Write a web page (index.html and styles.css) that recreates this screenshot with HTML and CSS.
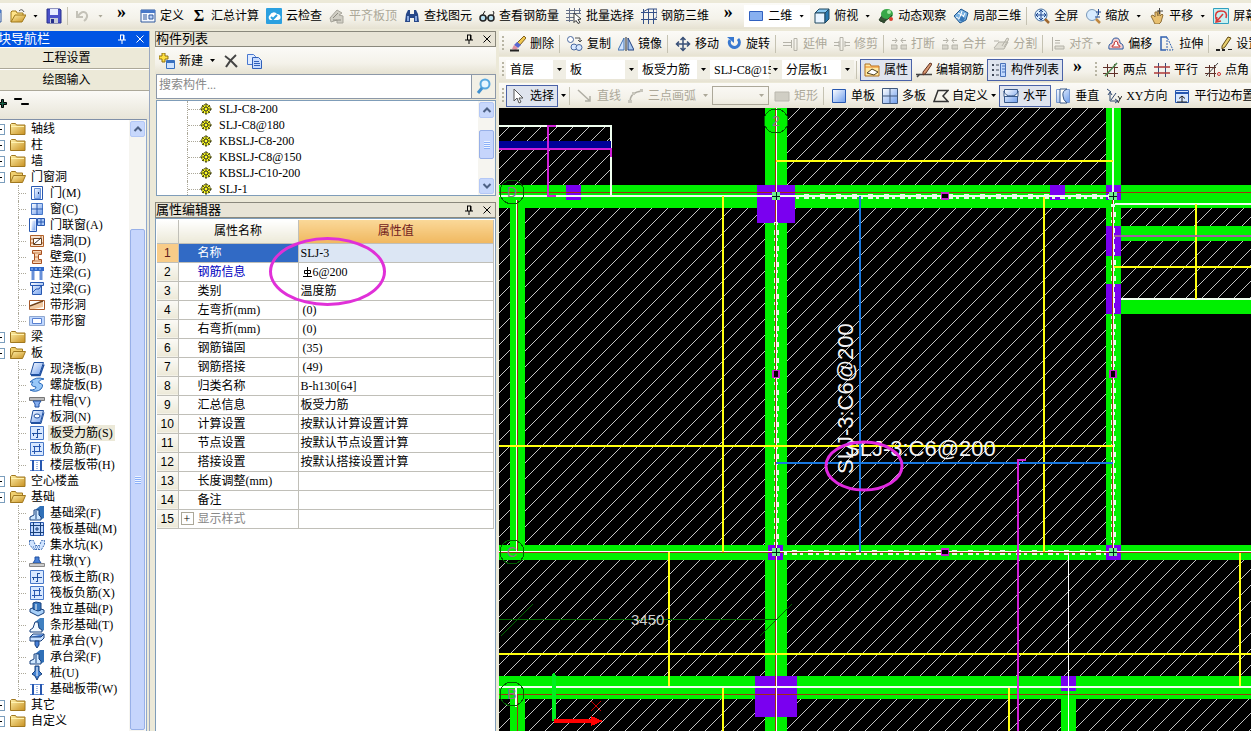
FILE: index.html
```html
<!DOCTYPE html>
<html lang="zh-CN">
<head>
    <meta charset="UTF-8">
    <meta name="viewport" content="width=device-width, initial-scale=1.0">
    <title>钢筋算量</title>
    <link rel="stylesheet" href="styles.css">
</head>
<body>
    <!-- icon sprite -->
    <svg class="sprite" aria-hidden="true">
        <defs>
            <linearGradient id="blueFill" x1="0" y1="0" x2="1" y2="1"><stop offset="0" stop-color="#fff"/><stop offset="1" stop-color="#6c9cec"/></linearGradient>
            <linearGradient id="goldFill" x1="0" y1="0" x2="1" y2="1"><stop offset="0" stop-color="#fff0a8"/><stop offset="1" stop-color="#c89020"/></linearGradient>
        </defs>
        <symbol id="open" viewBox="0 0 16 16"><path d="M1 14V4l1-1h4l1 2h6v2" fill="#ffe48a" stroke="#a07818"/><path d="M1 14L5 7h11l-4 7z" fill="url(#goldFill)" stroke="#a07818"/><path d="M9 3q3-3 5 1" fill="none" stroke="#555"/></symbol>
        <symbol id="save" viewBox="0 0 16 16"><path d="M1 1h13l1 1v13H1z" fill="#4a50c8" stroke="#26308c"/><path d="M4 1h8v6H4z" fill="#e8ecff"/><path d="M4 10h8v5H4z" fill="#c8ccd8"/><path d="M5 11h3v4H5z" fill="#26308c"/></symbol>
        <symbol id="undo" viewBox="0 0 16 16"><path d="M2 3v6h6M3 8q4-6 8-3 3 4-2 8" fill="none" stroke="#c4c2b8" stroke-width="2"/></symbol>
        <symbol id="define" viewBox="0 0 16 16"><path d="M1 2h14v12H1z" fill="#f4f8ff" stroke="#31589c"/><path d="M1 2h14v3H1z" fill="#4878c8"/><path d="M3 7h4M3 9h4M3 11h4" stroke="#31589c"/><path d="M9 7h4v4H9z" fill="#b8d0f8" stroke="#31589c"/></symbol>
        <symbol id="cloud" viewBox="0 0 16 16"><rect width="16" height="16" rx="1" fill="#2ba0e0"/><path d="M4 12a3 3 0 0 1 0-5 4 4 0 0 1 7-1 3 3 0 0 1 1 6z" fill="#fff"/><path d="M5 9l2 2 4-4" fill="none" stroke="#2ba0e0" stroke-width="2"/></symbol>
        <symbol id="flat" viewBox="0 0 16 16"><path d="M1 10L8 2l5 3-3 2 4 1v7H8v-3l-6 2z" fill="#d0cec4" stroke="#a8a69c"/><path d="M4 10l5-5M4 12h8" stroke="#8c8a80"/></symbol>
        <symbol id="find" viewBox="0 0 16 16"><path d="M2 6l2-4h2v4h4V2h2l2 4 1 8h-5v-4H6v4H1z" fill="#284888"/><path d="M3 8h2v5H3zM11 8h2v5h-2z" fill="#88a8e0"/></symbol>
        <symbol id="glasses" viewBox="0 0 16 16"><path d="M6 3L3 8M14 3l1 2-2 4" fill="none" stroke="#222"/><circle cx="4" cy="10" r="3" fill="#b8e0f0" stroke="#222" stroke-width="1.5"/><circle cx="12" cy="10" r="3" fill="#b8e0f0" stroke="#222" stroke-width="1.5"/><path d="M7 10h2" stroke="#222"/></symbol>
        <symbol id="batch" viewBox="0 0 16 16"><path d="M0 2.5h15M0 5.5h15M0 9.5h8M3.5 0v14M8.5 0v9M13.5 0v6M0 12.500h7" stroke="#667088"/><path d="M8 5l7 6-3 .5 2 3-2 1-2-3-2 2z" fill="#fff" stroke="#333"/></symbol>
        <symbol id="grid3" viewBox="0 0 16 16"><path d="M0 4.500h16M0 11.500h16M2.500 1v15M7.500 1v15M12.500 1v15M2 4l5-3h9v8l-4 3" fill="none" stroke="#345088"/></symbol>
        <symbol id="rect" viewBox="0 0 16 16"><path d="M1.500 3.500h13v9h-13z" fill="#88b0f0" stroke="#3060c0"/></symbol>
        <symbol id="cube" viewBox="0 0 16 16"><path d="M1 5l4-4h10l-4 4z" fill="#88c8f0" stroke="#204860"/><path d="M1 5h10v10H1z" fill="#e8f4ff" stroke="#204860"/><path d="M11 5l4-4v10l-4 4z" fill="#2878b0" stroke="#204860"/></symbol>
        <symbol id="orbit" viewBox="0 0 16 16"><path d="M1 12l4-6 5 3-4 6z" fill="#385838" stroke="#284028"/><ellipse cx="9" cy="6" rx="6" ry="5" fill="#38a848"/><circle cx="11" cy="4" r="2" fill="#a0e8a0"/><path d="M2 13Q9 14 14 7" fill="none" stroke="#284028"/><circle cx="13" cy="11" r="2" fill="#d84030"/></symbol>
        <symbol id="local3" viewBox="0 0 16 16"><path d="M1 8l7-7 7 4-2 7-6 3z" fill="#78b0e0" stroke="#205890"/><path d="M3 9l6 3 3-7M5 5l6 3M9 3l-3 9" fill="none" stroke="#fff"/><path d="M8 8l4 2-2 4-4-2z" fill="#3878b8"/></symbol>
        <symbol id="full" viewBox="0 0 16 16"><circle cx="7" cy="7" r="6" fill="#d8ecff" stroke="#4870a0"/><path d="M7 2v10M2 7h10M5 4l2-2 2 2M5 10l2 2 2-2M4 5L2 7l2 2M10 5l2 2-2 2" fill="none" stroke="#204890"/><path d="M11 11l4 4" stroke="#a06830" stroke-width="2.500"/></symbol>
        <symbol id="zoom" viewBox="0 0 16 16"><circle cx="7" cy="7" r="5.500" fill="#d8ecff" stroke="#7898b8"/><path d="M11 11l4 4" stroke="#c08840" stroke-width="2.500"/><path d="M13.500 1v6M11 4h5M10 9h5" stroke="#204890"/></symbol>
        <symbol id="pan" viewBox="0 0 16 16"><path d="M2 8l2-1 2 2V4h2l1 4V3h2v5l2-2 1 1-2 7-2 2H6z" fill="#e8c070" stroke="#907038"/><path d="M10.500 0v6M8 3h6" stroke="#444"/></symbol>
        <symbol id="screen" viewBox="0 0 16 16"><path d="M.5.500h15v15H.5z" fill="#c8f0f0" stroke="#30a0c0"/><path d="M3 11q-2-8 5-8t5 7M10 6l-6 7M4 9l-1 5 5-1" fill="none" stroke="#d83838" stroke-width="1.500"/></symbol>
        <symbol id="erase" viewBox="0 0 16 16"><path d="M14 0l2 2-6 7-3-2z" fill="#f0c850" stroke="#806020"/><path d="M7 6l4 3-3 3-4-3z" fill="#5868d0"/><path d="M4 9l4 3-2 2-4-1z" fill="#e090a0"/><path d="M0 14.500h9" stroke="#222" stroke-width="2"/></symbol>
        <symbol id="copy" viewBox="0 0 16 16"><circle cx="3.500" cy="3.500" r="3" fill="#fff" stroke="#4868a0"/><path d="M8 2h5v4M11 4l2 2 2-2" fill="none" stroke="#555"/><circle cx="7" cy="11" r="3" fill="#d8e8ff" stroke="#4868a0"/><circle cx="12" cy="11.500" r="3" fill="#d8e8ff" stroke="#4868a0"/></symbol>
        <symbol id="mirror" viewBox="0 0 16 16"><path d="M6 2v12H0z" fill="#d0e4ff" stroke="#4070b0"/><path d="M8 1v14" stroke="#222"/><path d="M10 2v12h6z" fill="#a8c8f0" stroke="#204080"/></symbol>
        <symbol id="move" viewBox="0 0 16 16"><path d="M8 1v14M1 8h14M5.500 4L8 1.500 10.500 4M5.500 12L8 14.500 10.500 12M4 5.500L1.500 8 4 10.500M12 5.500L14.500 8 12 10.500" fill="none" stroke="#385078" stroke-width="1.500"/></symbol>
        <symbol id="rotate" viewBox="0 0 16 16"><path d="M4 4a5 5 0 1 0 8-1" fill="none" stroke="#3878d0" stroke-width="3"/><path d="M1 1h7v6z" fill="#3878d0"/></symbol>
        <symbol id="extend" viewBox="0 0 16 16"><path d="M0 6.500h8M0 9.500h8M8.500 4v8M11 2.500h3v12h-3z" fill="none" stroke="#b4b2a8"/></symbol>
        <symbol id="trim" viewBox="0 0 16 16"><path d="M0 6.500h5M0 9.500h5M11 6.500h5M11 9.500h5M6 1.500h3v13H6zM5 5v6M11 5v6" fill="none" stroke="#b4b2a8"/></symbol>
        <symbol id="break" viewBox="0 0 16 16"><path d="M0 9h6v4H0zM10 9h6v4h-6z" fill="#d8d6cc" stroke="#b4b2a8"/><path d="M1 4.500h5M4 2l2 2.500L4 7M10 4.500h5M12 2l-2 2.500L12 7" fill="none" stroke="#b4b2a8"/></symbol>
        <symbol id="split" viewBox="0 0 16 16"><path d="M1 12l5-6h9l-4 7H1M9 10l5-8 2 1-5 8M1 5h5" fill="#e0ded4" stroke="#b4b2a8"/></symbol>
        <symbol id="align" viewBox="0 0 16 16"><path d="M2.500 1v14M5 4.500h5M5 7h5M5 10h9v3H5z" fill="#e0ded4" stroke="#b4b2a8"/></symbol>
        <symbol id="offset" viewBox="0 0 16 16"><path d="M1 13Q0 8 4 7 4 2 8 2t4 5q4 1 3 6z" fill="#f4d0d0" stroke="#2858a0"/><path d="M4 11q0-2 2-2 0-4 2-4t2 4q2 0 2 2z" fill="#fff" stroke="#c03030"/></symbol>
        <symbol id="stretch" viewBox="0 0 16 16"><path d="M8 1H2v13h5" fill="none" stroke="#3060b0" stroke-width="1.500"/><path d="M8 1v13h6z" fill="none" stroke="#3060b0" stroke-dasharray="2 1"/></symbol>
        <symbol id="setpt" viewBox="0 0 16 16"><path d="M6 10l6-9 3 1-6 9-3 2z" fill="#e8d070" stroke="#604810"/><path d="M0 13h4v2H0zM6 13h3v2H6zM12 13h4v1h-4z" fill="#222"/></symbol>
        <symbol id="prop" viewBox="0 0 16 16"><path d="M1 2h5l1 2h8v10H1z" fill="#ffe8a0" stroke="#b07020"/><path d="M1 5h14" stroke="#e88020"/><path d="M3 11l5-4 6 3-4 3z" fill="#fff" stroke="#504020"/></symbol>
        <symbol id="editbar" viewBox="0 0 16 16"><path d="M0 12.500h16M4 12l-3 3" stroke="#444" stroke-width="1.500"/><path d="M7 10l7-9 2 1-6 9-3 2z" fill="#d89870" stroke="#603020"/></symbol>
        <symbol id="list" viewBox="0 0 16 16"><path d="M1 2h2v2H1zM1 7h2v2H1zM1 12h2v2H1z" fill="#404858"/><path d="M5 3h3M5 8h3M5 13h3" stroke="#404858"/><path d="M9.500 1.500h5v13h-5z" fill="#c0d8ff" stroke="#4870b8"/><path d="M11 4h3M11 7h3M11 10h3" stroke="#4870b8"/></symbol>
        <symbol id="twopt" viewBox="0 0 16 16"><path d="M4.500 2v13M11.500 2v13M0 5.500h15M0 11.500h15" stroke="#603028"/><path d="M2 14L14 1" stroke="#508850" stroke-width="1.500"/></symbol>
        <symbol id="parallel" viewBox="0 0 16 16"><path d="M4.500 1v14M11.500 1v14" stroke="#384878"/><path d="M0 5h16M0 11h16" stroke="#b03838" stroke-width="1.500"/></symbol>
        <symbol id="ptangle" viewBox="0 0 16 16"><path d="M4.500 3v12M9.500 3v12M0 5.500h11M0 11.500h11" stroke="#603028"/><path d="M1 14L13 1" stroke="#444"/><circle cx="14" cy="12" r="1.500" fill="none" stroke="#d03030"/></symbol>
        <symbol id="cursor" viewBox="0 0 16 16"><path d="M4 1v12l3-3 2 5 2-1-2-4h4z" fill="#fff" stroke="#555"/></symbol>
        <symbol id="line" viewBox="0 0 16 16"><path d="M1 2l12 11M13 8v5H8" fill="none" stroke="#b0aea4" stroke-width="1.500"/></symbol>
        <symbol id="arc" viewBox="0 0 16 16"><path d="M2 14Q2 4 14 3" fill="none" stroke="#b0aea4" stroke-width="1.500"/><path d="M0 12h4v3H0zM4 4h3v3H4zM12 1h3v3h-3z" fill="#c8c6bc"/></symbol>
        <symbol id="rectg" viewBox="0 0 16 16"><path d="M1 4h14v9H1z" fill="#d0cec4" stroke="#bab8ae"/></symbol>
        <symbol id="single" viewBox="0 0 16 16"><path d="M1.500 1.500h13v13h-13z" fill="url(#blueFill)" stroke="#2858b0"/></symbol>
        <symbol id="multi" viewBox="0 0 16 16"><path d="M.5.500h15v15H.5z" fill="url(#blueFill)" stroke="#40587c"/><path d="M8 0v16M0 8h16" stroke="#40587c"/></symbol>
        <symbol id="poly" viewBox="0 0 16 16"><path d="M5 2.500h10L10 8l5 5.500H1z" fill="none" stroke="#333" stroke-width="1.500"/></symbol>
        <symbol id="horiz" viewBox="0 0 16 16"><path d="M1.500 1.500h13v13h-13z" fill="url(#blueFill)" stroke="#385888"/><path d="M1 3q1 5 7 5t7-5v5.500H1z" fill="#fff" stroke="#385888"/></symbol>
        <symbol id="vert" viewBox="0 0 16 16"><path d="M1.500 1.500h13v13h-13z" fill="url(#blueFill)" stroke="#7898d0"/><path d="M12 1q-5 2-4 7 0 4 4 7H5V1z" fill="#fff" stroke="#385888"/></symbol>
        <symbol id="xy" viewBox="0 0 16 16"><path d="M4 5v8h8M2 7l2-3 2 3M9 11l3 2-3 2M1 1l4 3M5 12l5-7" fill="none" stroke="#304870"/><path d="M12 8l2 3 2-3M14 11l-2 4" fill="none" stroke="#222"/></symbol>
        <symbol id="edge" viewBox="0 0 16 16"><path d="M1.500 2.500h13v12h-13z" fill="#d8e8ff" stroke="#2858b0"/><path d="M2 5h12" stroke="#2858b0" stroke-width="2"/><path d="M8 14V8M5 10.500L8 8l3 2.500M3 14h10" fill="none" stroke="#222"/></symbol>
        <symbol id="expandall" viewBox="0 0 16 16"><path d="M6.500 4.500h2v3h3v2h-3v3h-2v-3h-3v-2h3z" fill="#186048" stroke="#000"/></symbol>
        <symbol id="foldall" viewBox="0 0 16 16"><path d="M.5 3.500h7v1h-7zM7.500 8.500h7v1h-7z" fill="#186048" stroke="#000"/></symbol>
        <symbol id="pin" viewBox="0 0 10 10"><path d="M3 1h4M3.500 1v5M6.500 1v5M1 6h8M5 6v4" fill="none" stroke="currentColor"/><path d="M6 1h1.500v5H6z" fill="currentColor"/></symbol>
        <symbol id="close" viewBox="0 0 10 10"><path d="M1.500 1.500l7 7M8.500 1.500l-7 7" stroke="currentColor"/></symbol>
        <symbol id="new" viewBox="0 0 16 16"><path d="M4 0h2v3h3v3H6v3H3V6H0V3h3V0z" fill="#ffe040" stroke="#907010"/><path d="M7.500 7.500h8v8h-8z" fill="#d0e4ff" stroke="#3870c0"/><path d="M7 9h9" stroke="#3870c0" stroke-width="2"/></symbol>
        <symbol id="del" viewBox="0 0 16 16"><path d="M2 3q6 4 12 11M13 2Q7 7 3 14" fill="none" stroke="#444" stroke-width="2"/></symbol>
        <symbol id="dup" viewBox="0 0 16 16"><path d="M1.500 1.500h6l2 2v8h-8z" fill="#e0ecff" stroke="#4878d0"/><path d="M6.500 4.500h6l3 3v8h-9z" fill="#c8dcff" stroke="#3060b8"/><path d="M8 8.500h5M8 10.500h6M8 12.500h6" stroke="#3060b8"/></symbol>
        <symbol id="search" viewBox="0 0 16 16"><circle cx="9" cy="6" r="4.500" fill="#e8f6ff" stroke="#58a8e0" stroke-width="2"/><path d="M6 10l-4 5" stroke="#4090d0" stroke-width="3"/></symbol>
        <symbol id="gear" viewBox="0 0 12 12"><circle cx="6" cy="6" r="4.500" fill="#ffff20" stroke="#222" stroke-dasharray="2 1"/><path d="M6 0v12M0 6h12M2 2l8 8M10 2l-8 8" stroke="#555500"/><circle cx="6" cy="6" r="2" fill="#ffff20" stroke="#333"/></symbol>
        <symbol id="up" viewBox="0 0 10 10"><path d="M1.500 7L5 3.500 8.500 7" fill="none" stroke="#4d6185" stroke-width="2"/></symbol>
        <symbol id="down" viewBox="0 0 10 10"><path d="M1.500 3L5 6.500 8.500 3" fill="none" stroke="#4d6185" stroke-width="2"/></symbol>
        <symbol id="folder" viewBox="0 0 16 16"><path d="M.5 13.500v-10l1-1h4l1 1.500h8.500v9.500z" fill="url(#goldFill)" stroke="#a07820"/><path d="M1 5.500h13" stroke="#fff2b0"/></symbol>
        <symbol id="folderopen" viewBox="0 0 16 16"><path d="M.5 13.500v-10l1-1h4l1 1.500h6v3" fill="#f0d070" stroke="#a07820"/><path d="M.5 13.500l3-7h12l-3 7z" fill="url(#goldFill)" stroke="#a07820"/></symbol>
        <symbol id="door" viewBox="0 0 16 16"><path d="M2.500 1.500h11v13h-11z" fill="#fff" stroke="#2858b0"/><path d="M5.500 3.500h6v10h-6z" fill="url(#blueFill)" stroke="#6890d8"/><path d="M9.500 7v2" stroke="#203870"/></symbol>
        <symbol id="window" viewBox="0 0 16 16"><path d="M2.500 2.500h11v11h-11z" fill="url(#blueFill)" stroke="#4878c8"/><path d="M8 2v12M2 8h12" stroke="#2858b0"/></symbol>
        <symbol id="doorwin" viewBox="0 0 16 16"><path d="M.5 1.500h7v13h-7z" fill="#fff" stroke="#2858b0"/><path d="M2.500 3.500h4v10h-4z" fill="url(#blueFill)"/><path d="M8.500 1.500h7v7h-7zM12 1v8M8 5h8" fill="#a8c8f8" stroke="#2858b0"/></symbol>
        <symbol id="wallhole" viewBox="0 0 16 16"><path d="M1.500 2.500h13v11h-13z" fill="#f8e4d0" stroke="#b06028"/><path d="M1 6h4M1 10h4M12 2v4M12 10h3" stroke="#b06028"/><path d="M4.500 5.500h8v6h-8z" fill="#fff" stroke="#704018"/><path d="M5 11l7-6" stroke="#333"/></symbol>
        <symbol id="niche" viewBox="0 0 16 16"><path d="M3.500 1.500h9v4h-3v5h3v4h-9v-3h2v-7h-2z" fill="#f8d8b8" stroke="#a85020"/><path d="M4 4h8M6 8h3M4 12h8" stroke="#c88050"/></symbol>
        <symbol id="beam1" viewBox="0 0 16 16"><path d="M1 2h14v4H1z" fill="#3068c8"/><path d="M4 6v9M12 6v9" stroke="#6890d8" stroke-width="3"/><path d="M2 4h12" stroke="#a8c8ff" stroke-dasharray="2 2"/></symbol>
        <symbol id="beam2" viewBox="0 0 16 16"><path d="M1.500 1.500h13v3h-2v9h-9v-9h-2z" fill="url(#blueFill)" stroke="#2858b0"/><path d="M4 11l3-3h3l2-3M3 4.500h10" fill="none" stroke="#2858b0"/></symbol>
        <symbol id="striphole" viewBox="0 0 16 16"><path d="M.5 3.500h15v9H.5z" fill="#fff" stroke="#a85828"/><path d="M1 10l13-5v5L5 12H1z" fill="#f0c8a0"/><path d="M1 9l13-5" stroke="#704018" stroke-width="1.500"/></symbol>
        <symbol id="stripwin" viewBox="0 0 16 16"><path d="M.5 3.500h15v9H.5z" fill="#c0d8ff" stroke="#90a8d0"/><path d="M3.500 5.500h9v5h-9z" fill="#fff" stroke="#5880d0"/></symbol>
        <symbol id="slab" viewBox="0 0 16 16"><path d="M5 1.500h9.500l-4 12H1.500z" fill="url(#blueFill)" stroke="#2050a0"/><path d="M2 14.500h9l4-11" fill="none" stroke="#2050a0" stroke-width="1.500"/></symbol>
        <symbol id="spiral" viewBox="0 0 16 16"><path d="M1 5Q7-1 15 2q-6 1-5 4 6 1 2 6-5 4-11 1 6 0 6-3-7-1-3-5z" fill="#98c8f8" stroke="#2868b8"/></symbol>
        <symbol id="cap" viewBox="0 0 16 16"><path d="M.5 4.500h15v3H.5z" fill="#bbb" stroke="#777"/><path d="M4 8h8l-2 3v3H6v-3z" fill="#88b0f0" stroke="#2050a0"/></symbol>
        <symbol id="slabhole" viewBox="0 0 16 16"><path d="M4 1.500h10.500l-3 12H1.500z" fill="url(#blueFill)" stroke="#2050a0"/><ellipse cx="8" cy="7" rx="3" ry="2" fill="#fff" stroke="#2050a0"/><path d="M2 14.500h10l3-11" fill="none" stroke="#2050a0"/></symbol>
        <symbol id="rebar" viewBox="0 0 16 16"><path d="M1.500 1.500h13v13h-13z" fill="#d8e8ff" stroke="#4878c8"/><path d="M3 8.500h10M8.500 4v8M8 4.500h3M4.500 11V8M7 12.500h2" fill="none" stroke="#2050a0"/></symbol>
        <symbol id="negbar" viewBox="0 0 16 16"><path d="M1.500 1.500h13v13h-13z" fill="#d8e8ff" stroke="#4878c8"/><path d="M4 5.500h8M3 10.500h10M5.500 5v8M10.500 3v8" stroke="#2858b0"/></symbol>
        <symbol id="strip" viewBox="0 0 16 16"><path d="M1 3.500h14M1 13.500h14" stroke="#6890d8"/><path d="M4 3v11M12 3v11" stroke="#2858b0" stroke-width="2"/><path d="M8 3v11" stroke="#4878c8" stroke-dasharray="1 1"/></symbol>
        <symbol id="fbeam" viewBox="0 0 16 16"><path d="M6 5l5-4h4v12l-4 2z" fill="#3070b8"/><path d="M1 15v-3l4-2V5h5v5l2 2v3z" fill="#d0e8ff" stroke="#18407c"/><path d="M7 6v8" stroke="#18407c"/></symbol>
        <symbol id="raft" viewBox="0 0 16 16"><path d="M1.500 1.500h13v13h-13z" fill="#c0d8ff" stroke="#2858b0"/><path d="M4.500 1v14M11.500 1v14M1 4.500h14M1 11.500h14M7 7h2v2H7z" fill="none" stroke="#18407c"/></symbol>
        <symbol id="sump" viewBox="0 0 16 16"><path d="M.5 3.500h4l2 5h4l2-5h3v4l-3 5h-8l-4-5z" fill="#d0e4ff" stroke="#3868b0" stroke-dasharray="2 1"/><path d="M4 10h8M5 12h6" stroke="#3868b0" stroke-dasharray="1 1"/></symbol>
        <symbol id="pier" viewBox="0 0 16 16"><path d="M4 10l2-3V4h4v3l2 3z" fill="#4880d8" stroke="#2050a0"/><path d="M.5 10.500h15v3H.5z" fill="#ccc" stroke="#888"/></symbol>
        <symbol id="isolated" viewBox="0 0 16 16"><path d="M1 8l5-2 9 3v3l-6 3-8-4z" fill="#a8d0f8" stroke="#18407c"/><path d="M4 2l3-1 5 1v7l-3 1-5-2z" fill="#3878c0" stroke="#18407c"/><path d="M7 3v6" stroke="#fff"/></symbol>
        <symbol id="stripf" viewBox="0 0 16 16"><path d="M6 5l5-4h4v12l-3 2z" fill="#4080c0"/><path d="M1 15v-2l3-2 2-6h3l1 6 3 2v2z" fill="#f0f8ff" stroke="#18407c"/></symbol>
        <symbol id="pilecap" viewBox="0 0 16 16"><path d="M1 4l3-3h11v4l-3 3H1z" fill="#c8e0ff" stroke="#18407c"/><path d="M1 4h11l3-3M6 8h4v4l-2 3-2-3z" fill="#4880d8" stroke="#18407c"/></symbol>
        <symbol id="pile" viewBox="0 0 16 16"><path d="M6 1h4v5l3 3-3 2-2 4-2-4-3-2 3-3z" fill="#4080d0" stroke="#18407c"/><path d="M8 2v9" stroke="#fff"/></symbol>
    </svg>

    <header class="toolbar topbar">
        <svg class="icon cut"><use href="#define"/></svg>
        <button class="tool"><svg class="icon"><use href="#open"/></svg><i class="caret"></i></button>
        <button class="tool"><svg class="icon"><use href="#save"/></svg></button>
        <span class="sep"></span>
        <button class="tool off"><svg class="icon"><use href="#undo"/></svg><i class="caret"></i></button>
        <button class="more">»</button>
        <button class="tool"><svg class="icon"><use href="#define"/></svg>定义</button>
        <button class="tool"><span class="sigma">Σ</span>汇总计算</button>
        <button class="tool"><svg class="icon"><use href="#cloud"/></svg>云检查</button>
        <button class="tool off"><svg class="icon"><use href="#flat"/></svg>平齐板顶</button>
        <button class="tool"><svg class="icon"><use href="#find"/></svg>查找图元</button>
        <button class="tool"><svg class="icon"><use href="#glasses"/></svg>查看钢筋量</button>
        <button class="tool"><svg class="icon"><use href="#batch"/></svg>批量选择</button>
        <button class="tool"><svg class="icon"><use href="#grid3"/></svg>钢筋三维</button>
        <button class="more wide">»</button>
        <button class="tool view"><svg class="icon"><use href="#rect"/></svg>二维<i class="caret"></i></button>
        <button class="tool"><svg class="icon"><use href="#cube"/></svg>俯视<i class="caret"></i></button>
        <button class="tool"><svg class="icon"><use href="#orbit"/></svg>动态观察</button>
        <button class="tool"><svg class="icon"><use href="#local3"/></svg>局部三维</button>
        <span class="sep"></span>
        <button class="tool"><svg class="icon"><use href="#full"/></svg>全屏</button>
        <button class="tool"><svg class="icon"><use href="#zoom"/></svg>缩放<i class="caret"></i></button>
        <button class="tool"><svg class="icon"><use href="#pan"/></svg>平移<i class="caret"></i></button>
        <button class="tool"><svg class="icon"><use href="#screen"/></svg>屏幕</button>
        <span class="tab-edge"></span>
    </header>

    <main class="workspace">
        <aside class="nav">
            <div class="nav-inner">
                <div class="panel-title active"><h2>模块导航栏</h2><svg class="mini"><use href="#pin"/></svg><svg class="mini"><use href="#close"/></svg></div>
                <button class="nav-button">工程设置</button>
                <button class="nav-button">绘图输入</button>
                <div class="nav-tools"><svg class="icon"><use href="#expandall"/></svg><svg class="icon"><use href="#foldall"/></svg></div>
                <div class="tree-box">
                    <ul class="tree">
                        <li><div class="node"><svg class="icon"><use href="#folder"/></svg>轴线</div></li>
                        <li><div class="node"><svg class="icon"><use href="#folder"/></svg>柱</div></li>
                        <li><div class="node"><svg class="icon"><use href="#folder"/></svg>墙</div></li>
                        <li><div class="node"><svg class="icon"><use href="#folderopen"/></svg>门窗洞</div>
                            <ul>
                                <li><svg class="icon"><use href="#door"/></svg><span>门(M)</span></li>
                                <li><svg class="icon"><use href="#window"/></svg><span>窗(C)</span></li>
                                <li><svg class="icon"><use href="#doorwin"/></svg><span>门联窗(A)</span></li>
                                <li><svg class="icon"><use href="#wallhole"/></svg><span>墙洞(D)</span></li>
                                <li><svg class="icon"><use href="#niche"/></svg><span>壁龛(I)</span></li>
                                <li><svg class="icon"><use href="#beam1"/></svg><span>连梁(G)</span></li>
                                <li><svg class="icon"><use href="#beam2"/></svg><span>过梁(G)</span></li>
                                <li><svg class="icon"><use href="#striphole"/></svg><span>带形洞</span></li>
                                <li><svg class="icon"><use href="#stripwin"/></svg><span>带形窗</span></li>
                            </ul>
                        </li>
                        <li><div class="node"><svg class="icon"><use href="#folder"/></svg>梁</div></li>
                        <li><div class="node"><svg class="icon"><use href="#folderopen"/></svg>板</div>
                            <ul>
                                <li><svg class="icon"><use href="#slab"/></svg><span>现浇板(B)</span></li>
                                <li><svg class="icon"><use href="#spiral"/></svg><span>螺旋板(B)</span></li>
                                <li><svg class="icon"><use href="#cap"/></svg><span>柱帽(V)</span></li>
                                <li><svg class="icon"><use href="#slabhole"/></svg><span>板洞(N)</span></li>
                                <li class="selected"><svg class="icon"><use href="#rebar"/></svg><span>板受力筋(S)</span></li>
                                <li><svg class="icon"><use href="#negbar"/></svg><span>板负筋(F)</span></li>
                                <li><svg class="icon"><use href="#strip"/></svg><span>楼层板带(H)</span></li>
                            </ul>
                        </li>
                        <li><div class="node"><svg class="icon"><use href="#folder"/></svg>空心楼盖</div></li>
                        <li><div class="node"><svg class="icon"><use href="#folderopen"/></svg>基础</div>
                            <ul>
                                <li><svg class="icon"><use href="#fbeam"/></svg><span>基础梁(F)</span></li>
                                <li><svg class="icon"><use href="#raft"/></svg><span>筏板基础(M)</span></li>
                                <li><svg class="icon"><use href="#sump"/></svg><span>集水坑(K)</span></li>
                                <li><svg class="icon"><use href="#pier"/></svg><span>柱墩(Y)</span></li>
                                <li><svg class="icon"><use href="#rebar"/></svg><span>筏板主筋(R)</span></li>
                                <li><svg class="icon"><use href="#negbar"/></svg><span>筏板负筋(X)</span></li>
                                <li><svg class="icon"><use href="#isolated"/></svg><span>独立基础(P)</span></li>
                                <li><svg class="icon"><use href="#stripf"/></svg><span>条形基础(T)</span></li>
                                <li><svg class="icon"><use href="#pilecap"/></svg><span>桩承台(V)</span></li>
                                <li><svg class="icon"><use href="#fbeam"/></svg><span>承台梁(F)</span></li>
                                <li><svg class="icon"><use href="#pile"/></svg><span>桩(U)</span></li>
                                <li><svg class="icon"><use href="#strip"/></svg><span>基础板带(W)</span></li>
                            </ul>
                        </li>
                        <li><div class="node"><svg class="icon"><use href="#folder"/></svg>其它</div></li>
                        <li><div class="node"><svg class="icon"><use href="#folder"/></svg>自定义</div></li>
                    </ul>
                    <div class="scroll nav-scroll"><span class="scroll-btn"><svg><use href="#up"/></svg></span><span class="thumb"></span></div>
                </div>
            </div>
        </aside>

        <section class="panels">
            <div class="panel-title"><h2>构件列表</h2><svg class="mini"><use href="#pin"/></svg><svg class="mini"><use href="#close"/></svg></div>
            <div class="toolbar list-tools">
                <button class="tool"><svg class="icon"><use href="#new"/></svg>新建<i class="caret"></i></button>
                <button class="tool"><svg class="icon"><use href="#del"/></svg></button>
                <button class="tool"><svg class="icon"><use href="#dup"/></svg></button>
            </div>
            <div class="search">
                <input type="text" placeholder="搜索构件..." aria-label="搜索构件">
                <button aria-label="搜索"><svg class="icon"><use href="#search"/></svg></button>
            </div>
            <div class="component-box">
                <ul class="components">
                    <li><svg><use href="#gear"/></svg>SLJ-C8-200</li>
                    <li><svg><use href="#gear"/></svg>SLJ-C8@180</li>
                    <li><svg><use href="#gear"/></svg>KBSLJ-C8-200</li>
                    <li><svg><use href="#gear"/></svg>KBSLJ-C8@150</li>
                    <li><svg><use href="#gear"/></svg>KBSLJ-C10-200</li>
                    <li><svg><use href="#gear"/></svg>SLJ-1</li>
                </ul>
                <div class="scroll"><span class="scroll-btn"><svg><use href="#up"/></svg></span><span class="thumb"></span><span class="scroll-btn"><svg><use href="#down"/></svg></span></div>
            </div>

            <div class="panel-title second"><h2>属性编辑器</h2><svg class="mini"><use href="#pin"/></svg><svg class="mini"><use href="#close"/></svg></div>
            <div class="props">
                <table>
                    <thead><tr><th class="num"></th><th class="name">属性名称</th><th class="value">属性值</th></tr></thead>
                    <tbody>
                        <tr class="current"><th>1</th><td>名称</td><td>SLJ-3</td></tr>
                        <tr class="key"><th>2</th><td>钢筋信息</td><td class="in"><svg class="bar-mark" viewBox="0 0 9 10"><path d="M4.500 0v10M0 9.500h9M1.500 3.500h6v3h-6z" fill="none" stroke="#000"/></svg>6@200</td></tr>
                        <tr><th>3</th><td>类别</td><td>温度筋</td></tr>
                        <tr><th>4</th><td>左弯折(mm)</td><td class="in">(0)</td></tr>
                        <tr><th>5</th><td>右弯折(mm)</td><td class="in">(0)</td></tr>
                        <tr><th>6</th><td>钢筋锚固</td><td class="in">(35)</td></tr>
                        <tr><th>7</th><td>钢筋搭接</td><td class="in">(49)</td></tr>
                        <tr><th>8</th><td>归类名称</td><td>B-h130[64]</td></tr>
                        <tr><th>9</th><td>汇总信息</td><td>板受力筋</td></tr>
                        <tr><th>10</th><td>计算设置</td><td>按默认计算设置计算</td></tr>
                        <tr><th>11</th><td>节点设置</td><td>按默认节点设置计算</td></tr>
                        <tr><th>12</th><td>搭接设置</td><td>按默认搭接设置计算</td></tr>
                        <tr><th>13</th><td>长度调整(mm)</td><td></td></tr>
                        <tr><th>14</th><td>备注</td><td></td></tr>
                        <tr class="group"><th>15</th><td><button class="plus">+</button>显示样式</td><td></td></tr>
                    </tbody>
                </table>
                <span class="mark"></span>
            </div>
        </section>

        <section class="drawing">
            <div class="toolbar">
                <span class="grip"></span>
                <button class="tool"><svg class="icon"><use href="#erase"/></svg>删除</button>
                <span class="sep"></span>
                <button class="tool"><svg class="icon"><use href="#copy"/></svg>复制</button>
                <button class="tool"><svg class="icon"><use href="#mirror"/></svg>镜像</button>
                <span class="sep"></span>
                <button class="tool"><svg class="icon"><use href="#move"/></svg>移动</button>
                <button class="tool"><svg class="icon"><use href="#rotate"/></svg>旋转</button>
                <span class="sep"></span>
                <button class="tool off"><svg class="icon"><use href="#extend"/></svg>延伸</button>
                <button class="tool off"><svg class="icon"><use href="#trim"/></svg>修剪</button>
                <span class="sep"></span>
                <button class="tool off"><svg class="icon"><use href="#break"/></svg>打断</button>
                <button class="tool off"><svg class="icon"><use href="#break"/></svg>合并</button>
                <button class="tool off"><svg class="icon"><use href="#split"/></svg>分割</button>
                <span class="sep"></span>
                <button class="tool off tight"><svg class="icon"><use href="#align"/></svg>对齐<i class="caret"></i></button>
                <button class="tool"><svg class="icon"><use href="#offset"/></svg>偏移</button>
                <button class="tool"><svg class="icon"><use href="#stretch"/></svg>拉伸</button>
                <span class="sep"></span>
                <button class="tool"><svg class="icon"><use href="#setpt"/></svg>设置</button>
            </div>
            <div class="toolbar">
                <span class="grip"></span>
                <span class="combo w60"><select aria-label="楼层"><option>首层</option></select></span>
                <span class="combo w72"><select aria-label="构件大类"><option>板</option></select></span>
                <span class="combo w72"><select aria-label="构件类型"><option>板受力筋</option></select></span>
                <span class="combo w72"><select aria-label="构件"><option>SLJ-C8@15</option></select></span>
                <span class="combo w72"><select aria-label="分层"><option>分层板1</option></select></span>
                <span class="sep"></span>
                <button class="tool pressed"><svg class="icon"><use href="#prop"/></svg>属性</button>
                <button class="tool"><svg class="icon"><use href="#editbar"/></svg>编辑钢筋</button>
                <button class="tool pressed"><svg class="icon"><use href="#list"/></svg>构件列表</button>
                <button class="more">»</button>
                <span class="grip"></span>
                <button class="tool"><svg class="icon"><use href="#twopt"/></svg>两点</button>
                <button class="tool"><svg class="icon"><use href="#parallel"/></svg>平行</button>
                <button class="tool"><svg class="icon"><use href="#ptangle"/></svg>点角</button>
            </div>
            <div class="toolbar">
                <span class="grip"></span>
                <button class="tool pressed"><svg class="icon"><use href="#cursor"/></svg>选择</button><i class="caret"></i>
                <span class="sep"></span>
                <button class="tool off"><svg class="icon"><use href="#line"/></svg>直线</button>
                <button class="tool off"><svg class="icon"><use href="#arc"/></svg>三点画弧<i class="caret"></i></button>
                <span class="combo disabled"><select aria-label="弧参数" disabled><option></option></select></span>
                <button class="tool off"><svg class="icon"><use href="#rectg"/></svg>矩形</button>
                <span class="sep"></span>
                <button class="tool"><svg class="icon"><use href="#single"/></svg>单板</button>
                <button class="tool"><svg class="icon"><use href="#multi"/></svg>多板</button>
                <button class="tool tight"><svg class="icon"><use href="#poly"/></svg>自定义<i class="caret"></i></button>
                <button class="tool pressed"><svg class="icon"><use href="#horiz"/></svg>水平</button>
                <button class="tool"><svg class="icon"><use href="#vert"/></svg>垂直</button>
                <button class="tool"><svg class="icon"><use href="#xy"/></svg>XY方向</button>
                <button class="tool"><svg class="icon"><use href="#edge"/></svg>平行边布置</button>
            </div>

            <div class="canvas">
                <svg viewBox="499 108 752 623" preserveAspectRatio="xMinYMin slice" shape-rendering="crispEdges">
                    <defs>
                        <pattern id="hatch" width="16" height="16" patternUnits="userSpaceOnUse"><path d="M-2 14L14 -2M11 17L17 11" stroke="#c4c4c4" fill="none"/></pattern>
                    </defs>
                    <rect x="499" y="108" width="752" height="623" fill="#000"/>
                    <path fill="url(#hatch)" d="M499 126h112v59H499zM787 108h319v77H787zM499 208h11v337h-11zM525 208h240v337H525zM787 208h319v337H787zM1121 208h130v91h-130zM499 560h266v116H499zM787 560h464v116H787zM499 699h752v32H499z"/>
                    <!-- walls -->
                    <path class="wall" d="M499 185h752v23H499zM510 208h15v352h-15zM765 108h22v623h-22zM499 545h752v15H499zM499 676h752v23H499zM1106 108h15v452h-15zM1121 226h130v15h-130zM1121 300h130v14h-130zM1061 699h15v32h-15zM510 699h15v32h-15z"/>
                    <!-- columns -->
                    <path class="column" d="M566 185h15v15h-15zM757 185h38v38h-38zM1050 185h15v15h-15zM1106 185h15v15h-15zM1106 226h15v30h-15zM1106 284h15v30h-15zM768 545h15v15h-15zM1106 545h15v15h-15zM755 676h42v41h-42zM1061 676h15v15h-15z"/>
                    <!-- axes -->
                    <path class="axis" d="M499 192.500h752M499 552.500h752M499 694.500h752M517.500 200v352M517.500 694v37M775.500 108v623M1112.500 190v362"/>
                    <path class="thin" d="M499 551.500h752M516.500 200v352M776.500 108v623M1113.500 200v352M1068.500 553v178"/>
                    <path class="thick" d="M499 196h616M499 687h752M1113 108v88M1115 204h136M1114 299h137M499 126h112v69M516 687v20"/>
                    <path class="navy" d="M499 141h112v7H499z"/>
                    <path class="big-dash" d="M804 196.500h306M776 230v315M1113 212v333M792 552.500h314"/>
                    <path class="small-dash" d="M796 196.500h314M776 222v323M1113 204v341M784 552.500h322"/>
                    <path class="column" d="M1050 185h15v10h-15zM1106 226h6v30h-6zM1115 226h6v30h-6zM1106 284h6v30h-6zM1115 284h6v30h-6z"/>
                    <path class="axis" d="M775.500 223v322M1112.500 208v337M787 552.500h319"/>
                    <path class="yellow" d="M776 161h337M723 196v356M499 446h614M1044 197v355M669 552v134M499 654h752M723 688v43M1009 688v43M1240 553v133M1114 267h137M1196 204v95"/>
                    <path class="blue" d="M776 463h337M860 196v356"/>
                    <path class="pink" d="M499 149h112v8M556 126h-8v70h8M1026 460h-8v271"/>
                    <path d="M1114 236h137" stroke="#a060a0" stroke-width="2"/>
                    <!-- grip handles -->
                    <g fill="#70f090"><path d="M772 192h8v8h-8zM1109 192h8v8h-8zM772 548h8v8h-8zM1109 548h8v8h-8z"/></g>
                    <path d="M776 192v8M772 196h8M1113 192v8M1109 196h8M776 548v8M772 552h8M1113 548v8M1109 552h8" stroke="#001818"/>
                    <path fill="#c020c8" d="M772 370h8v8h-8zM1109 370h8v8h-8zM941 192h8v8h-8zM941 548h8v8h-8z"/>
                    <path fill="#000" d="M774 371h4v6h-4zM1111 371h4v6h-4zM942 194h6v4h-6zM942 550h6v4h-6z"/>
                    <!-- axis bubbles -->
                    <g class="bubble">
                        <circle cx="776" cy="121" r="12"/><circle cx="512" cy="192" r="12"/><circle cx="512" cy="552" r="12"/><circle cx="512" cy="694" r="12"/>
                        <text x="776" y="126">2</text><text x="512" y="197">D</text><text x="512" y="557">C</text><text x="512" y="699">B</text>
                    </g>
                    <!-- dimension -->
                    <path class="dim" d="M499 619.500h277M501 636l32-32M760 636l32-32"/>
                    <text class="dim-text" x="631" y="625">3450</text>
                    <text class="label" x="845" y="456">SLJ-3:C6@200</text>
                    <text class="label" transform="translate(853 474) rotate(-90)">SLJ-3:C6@200</text>
                    <!-- ucs -->
                    <path d="M552 721v-44h-1l3-5 3 5h-1v44z" fill="#00f020"/>
                    <path d="M554 719h37v-3l12 5-12 5v-3h-37z" fill="#f00"/>
                    <path d="M591 701l10 10M601 701l-10 10" stroke="#d00000" shape-rendering="auto"/>
                    <ellipse cx="864" cy="466" rx="38" ry="24" fill="none" stroke="#e028e0" stroke-width="3" shape-rendering="auto"/>
                </svg>
            </div>
        </section>
    </main>
</body>
</html>
```

FILE: styles.css
```css
* {
    margin: 0;
    padding: 0;
    box-sizing: border-box;
}

body {
    display: flex;
    flex-direction: column;
    height: 100vh;
    overflow: hidden;
    background-color: #ece9d8;
    color: #000;
    font-family: "Liberation Serif", "Noto Sans CJK SC", sans-serif;
    font-size: 12px;
    line-height: 16px;
    white-space: nowrap;
}

button,
input,
select {
    font: inherit;
    color: inherit;
    border: none;
    background: none;
}

ul {
    list-style: none;
}

.sprite {
    position: absolute;
    width: 0;
    height: 0;
}

.icon {
    width: 16px;
    height: 16px;
    flex: none;
}

/* toolbars */
.toolbar {
    display: flex;
    align-items: center;
    flex: none;
    height: 25px;
    overflow: hidden;
    background: linear-gradient(#fbfaf7, #f4f2ea 60%, #e6e2d2);
}

.topbar {
    position: relative;
    height: 31px;
    border-top: 3px solid #ece9d8;
    border-bottom: 2px solid #ece9d8;
}

.tool {
    display: flex;
    align-items: center;
    flex: none;
    gap: 4px;
    height: 22px;
    padding: 0 3px 0 4px;
}

.tool.off {
    color: #aca899;
}

.tool.tight {
    gap: 3px;
}

.tool.pressed {
    padding: 0 3px;
    border: 1px solid #4a62a8;
    background-color: #dfe4ee;
}

.tool.view {
    padding-right: 5px;
    background-color: #fff;
}

.caret {
    flex: none;
    width: 5px;
    height: 3px;
    margin: 0 1px 0 3px;
    background-color: currentColor;
    clip-path: polygon(0 0, 100% 0, 50% 100%);
}

.tight .caret {
    margin: 0;
}

.cut {
    margin-left: -14px;
    margin-right: 4px;
}

.sep {
    flex: none;
    width: 1px;
    height: 18px;
    margin: 0 3px 0 2px;
    background-color: #c5c2b2;
}

.more {
    flex: none;
    width: 29px;
    height: 24px;
    padding-bottom: 8px;
    font-size: 18px;
    font-weight: bold;
}

.more.wide {
    width: 32px;
}

.sigma {
    width: 16px;
    text-align: center;
    font-size: 16px;
    font-weight: bold;
}

.grip {
    flex: none;
    width: 2px;
    height: 16px;
    margin: 0 2px 0 3px;
    background: repeating-linear-gradient(#b8b5a4 0 2px, transparent 2px 4px);
}

.tab-edge {
    position: absolute;
    top: -3px;
    right: 0;
    width: 38px;
    height: 3px;
    background-color: #5a94f0;
    border-bottom-left-radius: 3px;
}

.combo {
    display: flex;
    flex: none;
    align-items: center;
    position: relative;
    height: 19px;
    background: linear-gradient(to left, #f0eee4 13px, #fff 13px);
}

.combo select {
    width: 100%;
    height: 19px;
    padding: 0 11px 0 4px;
    appearance: none;
    overflow: hidden;
}

.combo::after {
    content: "";
    position: absolute;
    right: 4px;
    width: 5px;
    height: 3px;
    background-color: #000;
    clip-path: polygon(0 0, 100% 0, 50% 100%);
}

.w60 {
    width: 60px;
}

.w72 {
    width: 72px;
}

.combo.disabled {
    width: 57px;
    margin-right: 1px;
    background: none;
    border: 1px solid #aca899;
}

.combo.disabled::after {
    background-color: #aca899;
}

/* layout */
.workspace {
    display: flex;
    flex: 1;
    min-height: 0;
}

.nav {
    display: flex;
    width: 150px;
    flex: none;
    overflow: hidden;
    border-right: 1px solid #9aa8c0;
}

.nav-inner {
    display: flex;
    flex-direction: column;
    flex: 1;
    margin-left: -16px;
}

.panels {
    display: flex;
    flex-direction: column;
    width: 349px;
    flex: none;
    padding: 0 3px 0 5px;
}

.drawing {
    display: flex;
    flex-direction: column;
    flex: 1;
    min-width: 0;
}

.drawing .toolbar + .toolbar {
    border-top: 1px solid #ece9d8;
    height: 26px;
}

.canvas {
    flex: 1;
    min-height: 0;
}

.canvas svg {
    display: block;
    width: 100%;
    height: 100%;
}

.panel-title {
    display: flex;
    align-items: center;
    flex: none;
    gap: 8px;
    height: 16px;
    padding-right: 3px;
    border: 1px solid #8a887c;
    background-color: #e8e4d6;
}

.panel-title h2 {
    flex: 1;
    font-size: 13px;
    font-weight: normal;
    line-height: 14px;
}

.panel-title.active {
    border-color: #0054e3;
    background-color: #0054e3;
    color: #fff;
}

.mini {
    width: 10px;
    height: 10px;
}

/* navigation */
.nav-button {
    height: 22px;
    border-top: 1px solid #fff;
    border-bottom: 1px solid #aca899;
    background-color: #ece9d8;
}

.nav-tools {
    display: flex;
    gap: 3px;
    height: 28px;
    padding: 4px 11px;
    background: linear-gradient(#fbfaf7, #e8e5d8);
}

.tree-box {
    display: flex;
    flex: 1;
    min-height: 0;
    margin-right: 2px;
    border-top: 1px solid #8090a8;
    border-right: 1px solid #8fa8cc;
    background-color: #fff;
}

.tree {
    flex: 1;
    padding-top: 1px;
    overflow: hidden;
}

.node {
    display: flex;
    align-items: center;
    gap: 5px;
    height: 16px;
    padding-left: 10px;
}

.node::before {
    content: "";
    width: 9px;
    height: 9px;
    border: 1px solid #7b9ebd;
    background: linear-gradient(#000, #000) center / 5px 1px no-repeat;
}

.tree ul {
    padding-left: 34px;
}

.tree ul li {
    display: flex;
    align-items: center;
    gap: 3px;
    height: 16px;
    border-left: 1px dotted #aca899;
}

.tree ul li::before {
    content: "";
    width: 7px;
    border-top: 1px dotted #aca899;
}

.tree ul span {
    padding: 0 2px;
}

.tree .selected span {
    background-color: #ece9d8;
}

.scroll {
    display: flex;
    flex-direction: column;
    align-items: center;
    flex: none;
    width: 17px;
    padding: 1px;
    background-color: #f6f5f0;
}

.scroll-btn {
    display: flex;
    align-items: center;
    justify-content: center;
    width: 15px;
    height: 16px;
    border: 1px solid #b4c8f6;
    border-radius: 2px;
    background-color: #c8d8fc;
}

.scroll-btn svg {
    width: 10px;
    height: 10px;
}

.thumb {
    width: 15px;
    height: 29px;
    margin: 12px 0 auto;
    border: 1px solid #98b0e8;
    border-radius: 2px;
    background: repeating-linear-gradient(#eef4ff 0 1px, #8cb0f8 1px 2px) center / 6px 8px no-repeat, #c6d5fc;
}

.nav-scroll .thumb {
    flex: 1;
    margin: 92px 0 0;
}

/* component list */
.list-tools {
    height: 27px;
}

.search {
    display: flex;
    height: 25px;
    margin: 0 0 1px 1px;
    border: 1px solid #8c98a8;
}

.search input {
    flex: 1;
    padding: 0 2px 4px;
    background-color: #fff;
}

.search input::placeholder {
    color: #888;
}

.search button {
    width: 24px;
    padding-top: 3px;
    border-left: 1px solid #8c98a8;
    background-color: #f2f0e6;
}

.component-box {
    display: flex;
    height: 96px;
    margin-left: 1px;
    overflow: hidden;
    border: 1px solid #7f9db9;
    background-color: #fff;
}

.components {
    flex: 1;
    padding-left: 30px;
}

.components li {
    display: flex;
    align-items: center;
    height: 16px;
    border-left: 1px dotted #aca899;
}

.components li::before {
    content: "";
    width: 12px;
    border-top: 1px dotted #aca899;
}

.components svg {
    width: 12px;
    height: 12px;
    margin-right: 7px;
}

/* property editor */
.panel-title.second {
    margin-top: 6px;
}

.props {
    flex: 1;
    position: relative;
    min-height: 0;
    padding: 1px;
    border: 1px solid #7f9db9;
    border-bottom: none;
    background-color: #fff;
}

.props table {
    width: 100%;
    table-layout: fixed;
    border-collapse: collapse;
}

.props th,
.props td {
    height: 19px;
    border-right: 1px solid #c0bfb8;
    border-bottom: 1px solid #c0bfb8;
    line-height: 16px;
    font-weight: normal;
    text-align: left;
    overflow: hidden;
}

.props td {
    padding: 0 2px;
}

.props td.in {
    padding-left: 4px;
}

.props td:nth-child(2) {
    padding-left: 19px;
}

.props thead th {
    height: 23px;
    text-align: center;
    background: linear-gradient(#fff, #ece9d8);
}

.props .num {
    width: 21px;
}

.props .name {
    width: 120px;
}

.props thead .value {
    color: #702020;
    background: linear-gradient(#fad898, #f0b860);
}

.props tbody th {
    font-family: "Liberation Sans", sans-serif;
    text-align: center;
    background: linear-gradient(#fbfaf6, #ece9d8);
}

.props .current th {
    color: #602020;
    background: #f8cc88;
}

.props .current td {
    background-color: #dce6f4;
}

.props .current td:nth-child(2) {
    color: #fff;
    background-color: #316ac5;
}

.props .key td:nth-child(2) {
    color: #0000c0;
}

.props .group td:nth-child(2) {
    padding-left: 2px;
    color: #888;
}

.bar-mark {
    width: 9px;
    height: 10px;
    margin-right: 1px;
    vertical-align: -1px;
}

.plus {
    width: 13px;
    height: 13px;
    margin-right: 4px;
    border: 1px solid #aca899;
    background-color: #fff;
    color: #000;
    line-height: 10px;
}

.mark {
    position: absolute;
    left: 113px;
    top: 18px;
    width: 117px;
    height: 69px;
    border: 3px solid #e030d8;
    border-radius: 50%;
}

/* plan drawing */
.wall {
    fill: #00f000;
}

.column {
    fill: #7a00f0;
}

.axis,
.thin,
.thick,
.yellow,
.blue,
.pink,
.dim {
    fill: none;
}

.axis {
    stroke: #a03010;
}

.thin {
    stroke: #fff;
}

.thick {
    stroke: #f0fff0;
    stroke-width: 2;
}

.navy {
    fill: #000098;
}

.big-dash {
    fill: none;
    stroke: #e8ffe8;
    stroke-width: 5;
    stroke-dasharray: 5 11;
}

.small-dash {
    fill: none;
    stroke: #e8ffe8;
    stroke-width: 4;
    stroke-dasharray: 3 13;
}

.yellow {
    stroke: #ffff10;
    stroke-width: 2;
}

.blue {
    stroke: #1878e0;
    stroke-width: 2;
}

.pink {
    stroke: #d020d8;
    stroke-width: 2;
}

.dim {
    stroke: #006800;
}

.bubble circle {
    fill: none;
    stroke: #006000;
}

.bubble text {
    fill: #907090;
    font: 14px "Liberation Sans", sans-serif;
    text-anchor: middle;
}

.dim-text {
    fill: #d0d0d0;
    font: 15px "Liberation Sans", sans-serif;
}

.label {
    fill: #f4f4f4;
    font: 22px "Liberation Sans", sans-serif;
}
```
